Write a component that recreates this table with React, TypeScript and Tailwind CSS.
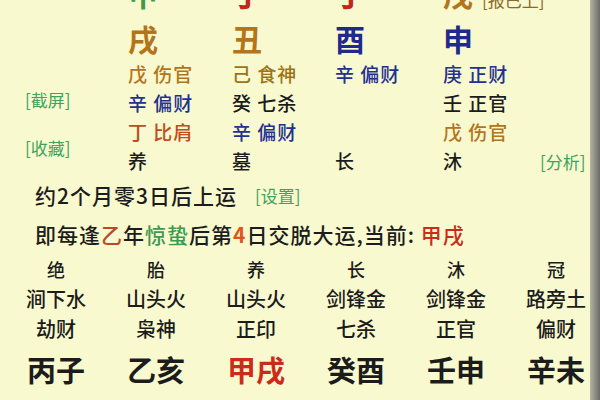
const font = { fontFamily: '"Noto Sans CJK SC", "Noto Sans", sans-serif' }

const gold = 'text-[#b3741a]'
const brown = 'text-[#9c7417]'
const blue = 'text-[#24328f]'
const red = 'text-[#c24a1e]'
const green = 'text-[#3ea35e]'
const dark = 'text-[#1c1c1c]'

const cols = ['w-[104px]', 'w-[103px]', 'w-[108px]', 'w-[97px]']

type Cell = { text: string; color: string } | null

function SmallRow({ cells, extra }: { cells: Cell[]; extra?: React.ReactNode }) {
  return (
    <div className="flex h-[29px] items-center text-[19px] font-medium tracking-[1px]">
      {cells.map((c, i) => (
        <div key={i} className={`${cols[i]} whitespace-nowrap ${c ? c.color : ''}`}>
          {c ? c.text : ''}
        </div>
      ))}
      {extra}
    </div>
  )
}

const bottom = [
  ['绝', '涧下水', '劫财', '丙子'],
  ['胎', '山头火', '枭神', '乙亥'],
  ['养', '山头火', '正印', '甲戌'],
  ['长', '剑锋金', '七杀', '癸酉'],
  ['沐', '剑锋金', '正官', '壬申'],
  ['冠', '路旁土', '偏财', '辛未'],
]

export default function App() {
  return (
    <div className="flex h-[400px] w-[600px] overflow-hidden bg-[#f9f9cf]" style={font}>
      <div className="w-[590px] shrink-0">
        {/* pillars */}
        <div className="-mt-[25px] flex">
          <div className="flex w-[128px] shrink-0 flex-col pl-[25px] pt-[113px] text-[17px] leading-[24px]">
            <span className={green}>[截屏]</span>
            <span className={`${green} mt-[24px]`}>[收藏]</span>
          </div>
          <div className="flex flex-col">
            <div className="flex h-[36px] items-center text-[30px] font-bold">
              <div className={`${cols[0]} text-[#3c9a4e]`}>甲</div>
              <div className={`${cols[1]} text-[#c0281c]`}>丁</div>
              <div className={`${cols[2]} text-[#c0281c]`}>丁</div>
              <div className={`${cols[3]} ${gold} flex items-end whitespace-nowrap`}>
                戊<span className="mb-[3px] ml-[9px] text-[17px] font-normal text-[#8a6a2a]">[报已上]</span>
              </div>
            </div>
            <div className="flex h-[49px] items-center pt-[5px] text-[30px] font-bold">
              <div className={`${cols[0]} ${gold}`}>戌</div>
              <div className={`${cols[1]} ${gold}`}>丑</div>
              <div className={`${cols[2]} text-[#1f2a8c]`}>酉</div>
              <div className={`${cols[3]} text-[#1f2a8c]`}>申</div>
            </div>
            <SmallRow
              cells={[
                { text: '戊 伤官', color: gold },
                { text: '己 食神', color: brown },
                { text: '辛 偏财', color: blue },
                { text: '庚 正财', color: blue },
              ]}
            />
            <SmallRow
              cells={[
                { text: '辛 偏财', color: blue },
                { text: '癸 七杀', color: dark },
                null,
                { text: '壬 正官', color: dark },
              ]}
            />
            <SmallRow
              cells={[
                { text: '丁 比肩', color: red },
                { text: '辛 偏财', color: blue },
                null,
                { text: '戊 伤官', color: gold },
              ]}
            />
            <SmallRow
              cells={[
                { text: '养', color: dark },
                { text: '墓', color: dark },
                { text: '长', color: dark },
                { text: '沐', color: dark },
              ]}
              extra={<span className={`${green} whitespace-nowrap text-[17px] font-normal tracking-normal`}>[分析]</span>}
            />
          </div>
        </div>

        {/* luck text */}
        <div className={`pl-[35px] text-[21px] font-medium leading-[39px] tracking-[1px] ${dark}`}>
          <div className="flex items-center whitespace-nowrap">
            约2个月零3日后上运
            <span className={`${green} ml-[18px] text-[17px] font-normal tracking-normal`}>[设置]</span>
          </div>
          <div className="whitespace-nowrap">
            即每逢<span className="text-[#b84a26]">乙</span>年<span className="text-[#3d9a52]">惊蛰</span>后第
            <span className="font-bold text-[#e0541c]">4</span>日交脱大运,当前: <span className="text-[#cc2b1c]">甲戌</span>
          </div>
        </div>

        {/* luck pillars */}
        <div className={`flex pl-[6px] ${dark}`}>
          {bottom.map((c, i) => (
            <div key={i} className="flex w-[100px] shrink-0 flex-col items-center whitespace-nowrap">
              <div className="h-[30px] text-[18px] font-medium leading-[30px]">{c[0]}</div>
              <div className="h-[30px] text-[20px] font-medium leading-[30px]">{c[1]}</div>
              <div className="h-[30px] text-[20px] font-medium leading-[30px]">{c[2]}</div>
              <div className={`h-[50px] text-[29px] font-bold leading-[50px] ${i === 2 ? 'text-[#cc2b1c]' : ''}`}>
                {c[3]}
              </div>
            </div>
          ))}
        </div>
      </div>
      <div className="w-[10px] shrink-0 bg-gradient-to-r from-[#b4b4a4] to-[#6c6c66]" />
    </div>
  )
}
